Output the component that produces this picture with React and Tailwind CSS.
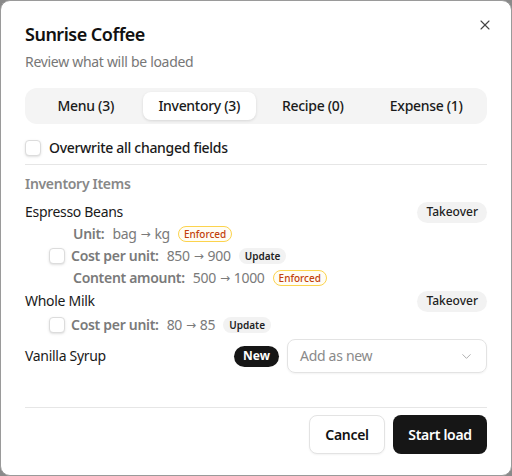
import { X, ChevronDown } from 'lucide-react'

function Enforced() {
  return (
    <span className="ml-[8px] inline-flex h-[16px] items-center rounded-full border border-[#fcd34d] bg-[#fffdf5] px-[5px] text-[10px] font-medium leading-none tracking-normal text-[#c2410c]">
      Enforced
    </span>
  )
}

function Update() {
  return (
    <span className="ml-[8px] inline-flex h-[16px] items-center rounded-full bg-[#f2f2f2] px-[6px] text-[10px] font-semibold leading-none tracking-normal text-[#222]">
      Update
    </span>
  )
}

function Box() {
  return <span className="h-[16px] w-[16px] shrink-0 rounded-[4px] border border-[#dcdcdc] bg-white shadow-sm" />
}

function Arrow() {
  return <span className="mx-[4px] font-['DejaVu_Sans',sans-serif] text-[12px]">→</span>
}

function Change({ label, from, to, badge, checkbox }) {
  return (
    <div className={`flex h-[22px] items-center text-[14px] leading-[20px] ${checkbox ? 'pl-[24px]' : 'pl-[48px]'}`}>
      {checkbox && <Box />}
      <span className={`font-semibold text-[#7a7a7a] ${checkbox ? 'ml-[6px]' : ''}`}>{label}:</span>
      <span className="ml-[8px] flex items-center text-[#7a7a7a]">
        {from}
        <Arrow />
        {to}
      </span>
      {badge === 'enforced' ? <Enforced /> : <Update />}
    </div>
  )
}

function Takeover() {
  return (
    <span className="inline-flex h-[21px] items-center rounded-full bg-[#f2f2f2] px-[9px] text-[12px] font-medium leading-none tracking-normal text-[#222]">
      Takeover
    </span>
  )
}

export default function App() {
  const tabs = ['Menu (3)', 'Inventory (3)', 'Recipe (0)', 'Expense (1)']

  return (
    <div className="h-[476px] w-[512px] bg-[#8a8a8a] font-['Noto_Sans',sans-serif] tracking-[-0.3px] text-[#1a1a1a]">
      <div className="relative h-full w-full rounded-[10px] border border-[#9a9a9a] bg-white px-[24px] pt-[20px]">
        <button className="absolute right-[18px] top-[16px] text-[#444]">
          <X size={16} strokeWidth={1.6} />
        </button>

        <h2 className="text-[18px] font-semibold leading-[26px] tracking-[-0.5px] text-[#111]">Sunrise Coffee</h2>
        <p className="mt-[5px] text-[14px] leading-[20px] text-[#777]">Review what will be loaded</p>

        {/* tabs */}
        <div className="mt-[16px] grid h-[36px] grid-cols-4 rounded-[12px] bg-[#f4f4f4] p-[4px]">
          {tabs.map((t, i) => (
            <div
              key={t}
              className={`flex items-center justify-center rounded-[8px] text-[14px] font-medium leading-[20px] text-[#1a1a1a] ${
                i === 1 ? 'bg-white shadow-[0_1px_3px_rgba(0,0,0,0.12)]' : ''
              }`}
            >
              {t}
            </div>
          ))}
        </div>

        <label className="mt-[14px] flex h-[20px] items-center gap-[8px]">
          <Box />
          <span className="text-[14px] font-medium leading-[20px]">Overwrite all changed fields</span>
        </label>

        <div className="mt-[6px] border-t border-[#e6e6e6]" />

        <div className="mt-[9px] text-[14px] font-semibold leading-[20px] text-[#888]">Inventory Items</div>

        <div className="mt-[7px]">
          <div className="flex h-[22px] items-center justify-between">
            <span className="text-[14px] leading-[20px]">Espresso Beans</span>
            <Takeover />
          </div>
          <Change label="Unit" from="bag" to="kg" badge="enforced" />
          <Change label="Cost per unit" from="850" to="900" badge="update" checkbox />
          <Change label="Content amount" from="500" to="1000" badge="enforced" />
        </div>

        <div className="mt-[1px]">
          <div className="flex h-[22px] items-center justify-between">
            <span className="text-[14px] leading-[20px]">Whole Milk</span>
            <Takeover />
          </div>
          <div className="mt-[2px]">
            <Change label="Cost per unit" from="80" to="85" badge="update" checkbox />
          </div>
        </div>

        <div className="mt-[3px] flex items-center justify-between">
          <span className="text-[14px] leading-[20px]">Vanilla Syrup</span>
          <div className="flex items-center gap-[8px]">
            <span className="inline-flex h-[21px] items-center rounded-full bg-[#161616] px-[9px] text-[12px] font-bold leading-none tracking-normal text-white">
              New
            </span>
            <div className="flex h-[34px] w-[200px] items-center justify-between rounded-[8px] border border-[#e3e3e3] px-[12px] shadow-[0_1px_2px_rgba(0,0,0,0.05)]">
              <span className="text-[14px] leading-[20px] text-[#8a8a8a]">Add as new</span>
              <ChevronDown size={15} strokeWidth={1.5} className="text-[#aaa]" />
            </div>
          </div>
        </div>

        <div className="mt-[34px] border-t border-[#e6e6e6]" />

        <div className="mt-[7px] flex justify-end gap-[8px]">
          <button className="h-[39px] w-[76px] rounded-[8px] border border-[#e3e3e3] bg-white text-[14px] font-semibold text-[#111] shadow-[0_1px_2px_rgba(0,0,0,0.05)]">
            Cancel
          </button>
          <button className="h-[39px] w-[94px] rounded-[8px] bg-[#161616] text-[14px] font-semibold text-white">
            Start load
          </button>
        </div>
      </div>
    </div>
  )
}
